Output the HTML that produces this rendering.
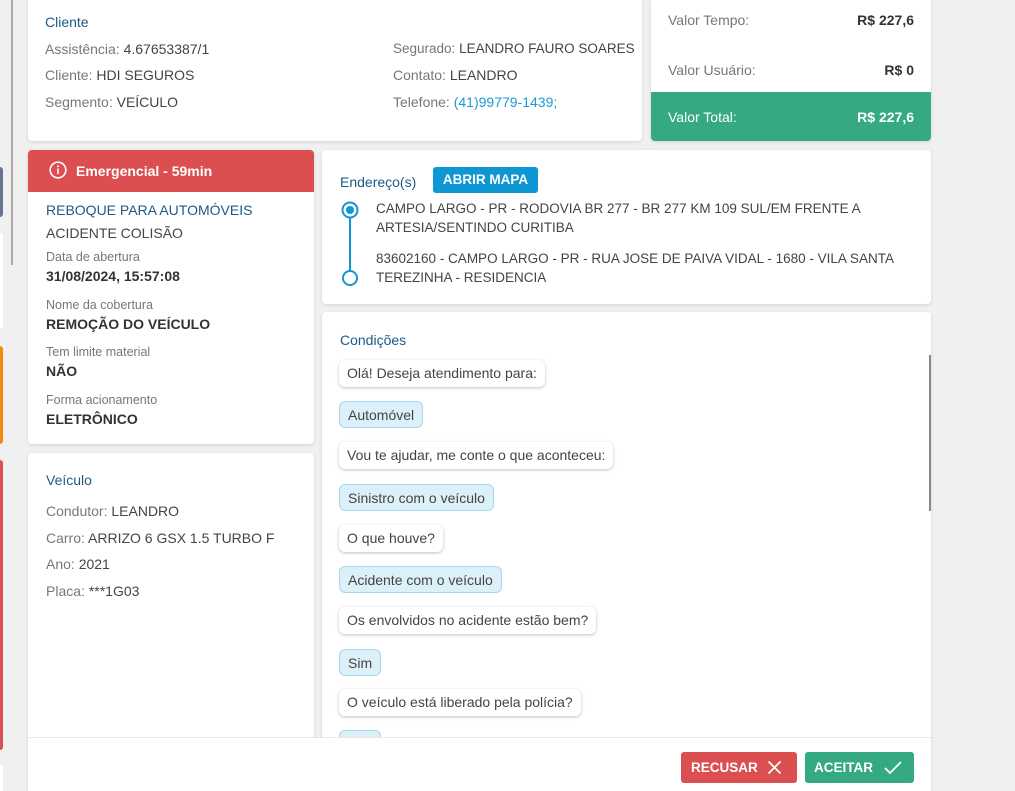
<!DOCTYPE html>
<html><head><meta charset="utf-8"><style>
*{box-sizing:border-box;margin:0;padding:0}
html,body{width:1015px;height:791px;overflow:hidden}
body{background:#f0f0f0;font-family:"Liberation Sans",sans-serif;color:#444;font-size:14px;position:relative}
.card{position:absolute;background:#fff;border-radius:4px;box-shadow:0 1px 3px rgba(0,0,0,.12)}
.t{position:absolute;white-space:nowrap}
.title{color:#1d5a84;font-size:14px}
.lab{color:#777}
.sm{font-size:12.5px;color:#777}
.b{font-weight:bold;color:#333}
.bub{position:absolute;left:17px;height:27px;line-height:27px;padding:0 8px;border-radius:6px;background:#fff;box-shadow:0 1px 3px rgba(0,0,0,.25);font-size:14px;color:#444;white-space:nowrap}
.bub.a{background:#dcf0f9;border:1px solid #a8d8ef;box-shadow:none}
</style></head><body>
<div style="position:absolute;left:11px;top:0;width:2px;height:265px;background:#aaa"></div>
<div style="position:absolute;left:0;top:167px;width:3px;height:50px;background:#66758f;border-radius:0 3px 3px 0"></div>
<div style="position:absolute;left:0;top:233px;width:3px;height:95px;background:#fff"></div>
<div style="position:absolute;left:0;top:346px;width:3px;height:98px;background:#f7890b;border-radius:0 3px 3px 0"></div>
<div style="position:absolute;left:0;top:460px;width:3px;height:290px;background:#dc4f50;border-radius:0 3px 3px 0"></div>
<div style="position:absolute;left:0;top:765px;width:3px;height:26px;background:#fff"></div>

<div class="card" style="left:28px;top:-4px;width:614px;height:145px">
<div class="t title" style="left:17px;top:18px">Cliente</div>
<div class="t lab" style="left:17px;top:45px">Assistência: <span style="color:#444">4.67653387/1</span></div>
<div class="t lab" style="left:17px;top:71px">Cliente: <span style="color:#444">HDI SEGUROS</span></div>
<div class="t lab" style="left:17px;top:98px">Segmento: <span style="color:#444">VEÍCULO</span></div>
<div class="t lab" style="left:365px;top:45px;font-size:13.5px">Segurado: <span style="color:#444">LEANDRO FAURO SOARES</span></div>
<div class="t lab" style="left:365px;top:71px">Contato: <span style="color:#444">LEANDRO</span></div>
<div class="t lab" style="left:365px;top:98px">Telefone: <span style="color:#1a9bd7">(41)99779-1439;</span></div>
</div>

<div class="card" style="left:651px;top:-4px;width:280px;height:145px;overflow:hidden">
<div class="t lab" style="left:17px;top:16px">Valor Tempo:</div>
<div class="t b" style="right:17px;top:16px">R$ 227,6</div>
<div class="t lab" style="left:17px;top:66px">Valor Usuário:</div>
<div class="t b" style="right:17px;top:66px">R$ 0</div>
<div style="position:absolute;left:0;top:96px;width:280px;height:49px;background:#35aa80;color:#fff">
<div class="t" style="left:17px;top:17px">Valor Total:</div>
<div class="t" style="right:17px;top:17px;font-weight:bold">R$ 227,6</div></div>
</div>

<div class="card" style="left:28px;top:150px;width:286px;height:294px;overflow:hidden">
<div style="height:42px;background:#dc4f50;color:#fff;font-weight:bold;font-size:14px;position:relative">
<svg style="position:absolute;left:21px;top:11px" width="18" height="18" viewBox="0 0 18 18"><circle cx="9" cy="9" r="7.8" fill="none" stroke="#fff" stroke-width="1.6"/><rect x="8.2" y="7.5" width="1.6" height="5.5" fill="#fff"/><circle cx="9" cy="5.2" r="1" fill="#fff"/></svg>
<div class="t" style="left:48px;top:13px">Emergencial - 59min</div></div>
<div class="t" style="left:18px;top:52px;color:#1d5a84;font-size:14px">REBOQUE PARA AUTOMÓVEIS</div>
<div class="t" style="left:18px;top:75px">ACIDENTE COLISÃO</div>
<div class="t sm" style="left:18px;top:100px">Data de abertura</div>
<div class="t b" style="left:18px;top:118px">31/08/2024, 15:57:08</div>
<div class="t sm" style="left:18px;top:148px">Nome da cobertura</div>
<div class="t b" style="left:18px;top:166px">REMOÇÃO DO VEÍCULO</div>
<div class="t sm" style="left:18px;top:195px">Tem limite material</div>
<div class="t b" style="left:18px;top:213px">NÃO</div>
<div class="t sm" style="left:18px;top:243px">Forma acionamento</div>
<div class="t b" style="left:18px;top:261px">ELETRÔNICO</div>
</div>

<div class="card" style="left:28px;top:453px;width:286px;height:338px;border-radius:4px 4px 0 0">
<div class="t title" style="left:18px;top:19px">Veículo</div>
<div class="t lab" style="left:18px;top:50px">Condutor: <span style="color:#444">LEANDRO</span></div>
<div class="t lab" style="left:18px;top:77px">Carro: <span style="color:#444">ARRIZO 6 GSX 1.5 TURBO F</span></div>
<div class="t lab" style="left:18px;top:103px">Ano: <span style="color:#444">2021</span></div>
<div class="t lab" style="left:18px;top:130px">Placa: <span style="color:#444">***1G03</span></div>
</div>

<div class="card" style="left:322px;top:150px;width:609px;height:154px">
<div class="t title" style="left:18px;top:24px">Endereço(s)</div>
<div style="position:absolute;left:111px;top:17px;width:105px;height:26px;background:#0e97d3;color:#fff;font-weight:bold;font-size:13.5px;line-height:26px;text-align:center;border-radius:3px">ABRIR MAPA</div>
<svg style="position:absolute;left:17px;top:50px" width="22" height="90"><line x1="11" y1="10" x2="11" y2="78" stroke="#0e97d3" stroke-width="2"/><circle cx="11" cy="10" r="7.5" fill="#fff" stroke="#0e97d3" stroke-width="2"/><circle cx="11" cy="10" r="4" fill="#0e97d3"/><circle cx="11" cy="78" r="7" fill="#fff" stroke="#0e97d3" stroke-width="2"/></svg>
<div style="position:absolute;left:54px;top:49px;width:530px;line-height:19px;font-size:13.5px">CAMPO LARGO - PR - RODOVIA BR 277 - BR 277 KM 109 SUL/EM FRENTE A ARTESIA/SENTINDO CURITIBA</div>
<div style="position:absolute;left:54px;top:99px;width:540px;line-height:19px;font-size:13.5px">83602160 - CAMPO LARGO - PR - RUA JOSE DE PAIVA VIDAL - 1680 - VILA SANTA TEREZINHA - RESIDENCIA</div>
</div>

<div class="card" style="left:322px;top:312px;width:609px;height:479px;overflow:hidden;border-radius:4px 4px 0 0">
<div class="t title" style="left:18px;top:20px">Condições</div>
<div style="position:absolute;left:607px;top:43px;width:2px;height:156px;background:#888"></div>
<div class="bub" style="top:48px">Olá! Deseja atendimento para:</div>
<div class="bub a" style="top:89px">Automóvel</div>
<div class="bub" style="top:130px">Vou te ajudar, me conte o que aconteceu:</div>
<div class="bub a" style="top:172px">Sinistro com o veículo</div>
<div class="bub" style="top:213px">O que houve?</div>
<div class="bub a" style="top:254px">Acidente com o veículo</div>
<div class="bub" style="top:295px">Os envolvidos no acidente estão bem?</div>
<div class="bub a" style="top:337px">Sim</div>
<div class="bub" style="top:377px">O veículo está liberado pela polícia?</div>
<div class="bub a" style="top:418px">Sim</div>
</div>

<div style="position:absolute;left:28px;top:737px;width:903px;height:54px;background:#fff;border-top:1px solid #e6e6e6">
<div style="position:absolute;left:653px;top:14px;width:116px;height:31px;background:#dc4f50;border-radius:3px;color:#fff;font-weight:bold;font-size:13.5px;line-height:31px;padding-left:10px">RECUSAR
<svg style="position:absolute;left:86px;top:8px" width="15" height="15"><path d="M1.5 1.5L13.5 13.5M13.5 1.5L1.5 13.5" stroke="#fff" stroke-width="1.8"/></svg></div>
<div style="position:absolute;left:777px;top:14px;width:109px;height:31px;background:#35aa80;border-radius:3px;color:#fff;font-weight:bold;font-size:13.5px;line-height:31px;padding-left:9px">ACEITAR
<svg style="position:absolute;left:79px;top:8px" width="18" height="15"><path d="M1 8L6 13L17 2" fill="none" stroke="#fff" stroke-width="1.8"/></svg></div>
</div>
</body></html>
